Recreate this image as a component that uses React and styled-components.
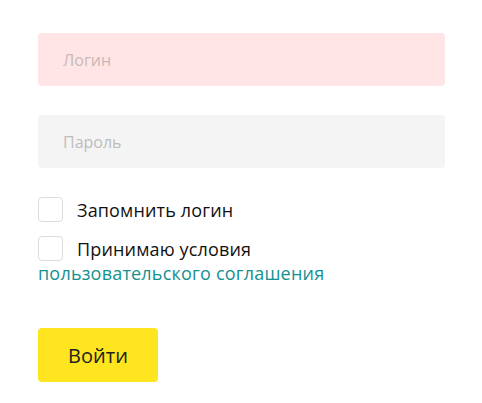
import styled, { createGlobalStyle } from "styled-components";

const GlobalStyle = createGlobalStyle`
  body {
    margin: 0;
    background: #fff;
    font-family: "Open Sans", "Noto Sans", sans-serif;
  }
`;

const Form = styled.form`
  display: flex;
  flex-direction: column;
  padding: 33px 37px 0 38px;
`;

const Input = styled.input`
  box-sizing: border-box;
  width: 100%;
  height: 53px;
  border: none;
  border-radius: 4px;
  padding: 0 25px;
  margin-bottom: ${({ $gap }) => $gap}px;
  background: ${({ $error }) => ($error ? "#ffe5e5" : "#f4f4f4")};
  font-family: inherit;
  font-size: 16px;
  color: #333;
  &::placeholder {
    color: ${({ $error }) => ($error ? "#c9b8b8" : "#bdbdbd")};
  }
  &:focus {
    outline: none;
  }
`;

const CheckRow = styled.label`
  display: flex;
  align-items: center;
  gap: 14px;
  font-size: 18px;
  letter-spacing: 0.15px;
  color: #111;
  margin-top: ${({ $top }) => $top}px;
`;

const Box = styled.span`
  box-sizing: border-box;
  width: 25px;
  height: 25px;
  border: 1px solid #dcdcdc;
  border-radius: 4px;
  flex-shrink: 0;
`;

const Agreement = styled.a`
  font-size: 18px;
  letter-spacing: 0.2px;
  color: #15918f;
  text-decoration: none;
  line-height: 24px;
`;

const Button = styled.button`
  align-self: flex-start;
  margin-top: 43px;
  width: 120px;
  height: 54px;
  border: none;
  border-radius: 4px;
  background: #ffe51f;
  font-family: inherit;
  font-size: 20px;
  color: #222;
  cursor: pointer;
`;

const App = () => {
  return (
    <>
      <GlobalStyle />
      <Form onSubmit={(e) => e.preventDefault()}>
        <Input $error $gap={29} type="text" placeholder="Логин" />
        <Input $gap={0} type="password" placeholder="Пароль" />
        <CheckRow $top={29}>
          <Box />
          Запомнить логин
        </CheckRow>
        <CheckRow $top={14}>
          <Box />
          Принимаю условия
        </CheckRow>
        <Agreement href="#">пользовательского соглашения</Agreement>
        <Button type="submit">Войти</Button>
      </Form>
    </>
  );
};

export default App;
